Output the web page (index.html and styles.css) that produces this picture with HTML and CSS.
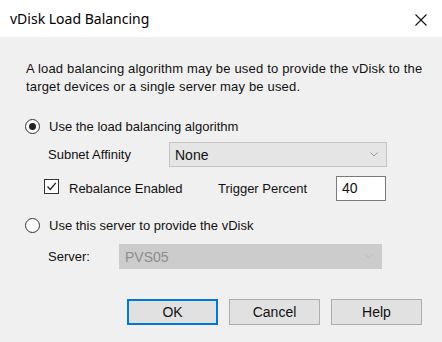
FILE: index.html
```html
<!DOCTYPE html>
<html lang="en">
<head>
<meta charset="UTF-8">
<title>vDisk Load Balancing</title>
<link rel="stylesheet" href="styles.css">
</head>
<body>

<div class="titlebar">
  <span class="title">vDisk Load Balancing</span>
  <svg class="close" width="12" height="12" viewBox="0 0 12 12">
    <path d="M0.5 0.5 L11.5 11.5 M11.5 0.5 L0.5 11.5" stroke="#111" stroke-width="1.1" fill="none"/>
  </svg>
</div>

<div class="dialog">
  <p class="desc">A load balancing algorithm may be used to provide the vDisk to the target devices or a single server may be used.</p>

  <div class="row option">
    <span class="radio checked"></span>
    <span>Use the load balancing algorithm</span>
  </div>

  <div class="row sub">
    <span class="label-subnet">Subnet Affinity</span>
    <div class="select subnet">
      <span>None</span>
      <svg class="chev" width="8" height="5" viewBox="0 0 8 5"><path d="M0.5 0.5 L4 4 L7.5 0.5" stroke="#999" fill="none"/></svg>
    </div>
  </div>

  <div class="row sub rebalance">
    <span class="check">
      <svg width="11" height="11" viewBox="0 0 11 11"><path d="M1.5 5.5 L4.3 8.5 L9.8 1.8" stroke="#222" stroke-width="1.3" fill="none"/></svg>
    </span>
    <span class="label-rebal">Rebalance Enabled</span>
    <span class="label-trigger">Trigger Percent</span>
    <div class="textbox">40</div>
  </div>

  <div class="row option second">
    <span class="radio"></span>
    <span>Use this server to provide the vDisk</span>
  </div>

  <div class="row sub server-row">
    <span class="label-server">Server:</span>
    <div class="select server disabled">
      <span>PVS05</span>
      <svg class="chev" width="8" height="5" viewBox="0 0 8 5"><path d="M0.5 0.5 L4 4 L7.5 0.5" stroke="#bbb" fill="none"/></svg>
    </div>
  </div>

  <div class="buttons">
    <button class="default">OK</button>
    <button>Cancel</button>
    <button>Help</button>
  </div>
</div>

</body>
</html>
```

FILE: styles.css
```css
body {
  margin: 0;
  background: #f0f0f0;
  font-family: "Liberation Sans", Arial, sans-serif;
  font-size: 13px;
  color: #111;
}

.titlebar {
  height: 37px;
  background: #fff;
  display: flex;
  align-items: center;
  justify-content: space-between;
  padding: 0 15px 0 10px;
}

.title {
  font-family: "Noto Sans", sans-serif;
  font-size: 14px;
  color: #000;
}

.close {
  margin-top: 2px;
}

.dialog {
  padding: 23px 0 0 25px;
}

.desc {
  margin: 0 0 0 1px;
  width: 410px;
  line-height: 18px;
  letter-spacing: 0.18px;
}

.row {
  display: flex;
  align-items: center;
}

.option {
  margin-top: 20px;
  height: 20px;
}

.option.second {
  margin-top: 14px;
}

.radio {
  width: 13px;
  height: 13px;
  border: 1px solid #333;
  border-radius: 50%;
  background: #fff;
  margin-right: 9px;
  display: flex;
  align-items: center;
  justify-content: center;
}

.radio.checked::after {
  content: "";
  width: 7px;
  height: 7px;
  border-radius: 50%;
  background: #222;
}

.sub {
  margin-top: 6px;
  padding-left: 23px;
}

.server-row {
  margin-top: 9px;
}

.label-subnet {
  width: 121px;
}

.label-server {
  width: 71px;
}

.select {
  border: 1px solid #c4c4c4;
  background: #e5e5e5;
  display: flex;
  align-items: center;
  justify-content: space-between;
  padding: 0 8px 0 5px;
  box-sizing: border-box;
  height: 25px;
}

.subnet {
  width: 218px;
  font-size: 14px;
}

.server {
  width: 263px;
}

.disabled {
  background: #cccccc;
  border-color: #cccccc;
  color: #8c8c8c;
  font-size: 14px;
}

.rebalance {
  margin-top: 9px;
  padding-left: 19px;
}

.check {
  width: 13px;
  height: 13px;
  border: 1px solid #333;
  background: #fff;
  display: flex;
  align-items: center;
  justify-content: center;
  margin-right: 10px;
  margin-top: -4px;
}

.label-rebal {
  width: 149px;
}

.label-trigger {
  width: 118px;
}

.textbox {
  width: 50px;
  height: 25px;
  box-sizing: border-box;
  background: #fff;
  border: 1px solid #7a7a7a;
  padding: 3px 0 0 5px;
  font-size: 14px;
}

.buttons {
  display: flex;
  gap: 11px;
  margin: 30px 0 0 102px;
}

button {
  width: 91px;
  height: 26px;
  background: #e1e1e1;
  border: 1px solid #adadad;
  font-family: "Liberation Sans", Arial, sans-serif;
  font-size: 14px;
  color: #111;
  padding: 0;
}

button.default {
  border: 2px solid #0078d7;
}
```
